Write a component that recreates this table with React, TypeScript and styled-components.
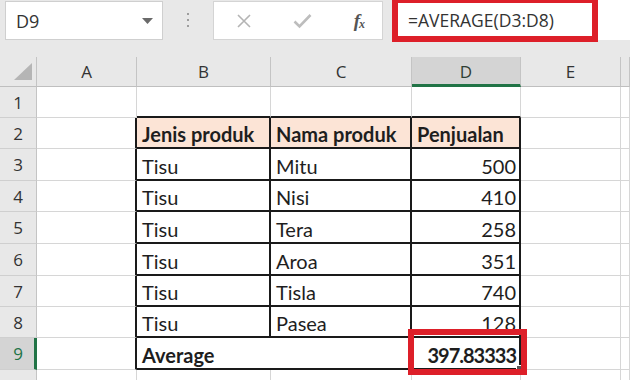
import React from "react";
import styled, { createGlobalStyle } from "styled-components";

const Global = createGlobalStyle`
  html, body { margin: 0; padding: 0; background: #ffffff; }
  body { width: 630px; height: 380px; overflow: hidden; }
`;

const UI_FONT = `"Open Sans", "Noto Sans", sans-serif`;
const CELL_FONT = `Lato, "Open Sans", sans-serif`;
const GRID = "#d6d6d6";
const INK = "#1a1a1a";
const RED = "#dd1f29";
const GREEN = "#217346";

const Page = styled.div`
  width: 630px;
  height: 380px;
  display: flex;
  flex-direction: column;
  overflow: hidden;
  background: #e8e8e8;
`;

const Toolbar = styled.div`
  height: 57px;
  flex: none;
  display: flex;
  align-items: flex-start;
  padding-left: 5px;
  background: #e8e8e8;
  font-family: ${UI_FONT};
`;

const NameBox = styled.div`
  margin-top: 1px;
  width: 158px;
  height: 39px;
  box-sizing: border-box;
  background: #fff;
  border: 1px solid #cfcfcf;
  display: flex;
  align-items: center;
  justify-content: space-between;
  padding: 0 9px 0 10px;
  font-size: 18px;
  color: #333;
`;

const Separator = styled.div`
  width: 50px;
  height: 40px;
  display: flex;
  flex-direction: column;
  align-items: center;
  justify-content: center;
  gap: 4px;
`;

const Dot = styled.span`
  width: 2px;
  height: 2px;
  background: #9d9d9d;
`;

const ButtonBox = styled.div`
  margin-top: 1px;
  width: 170px;
  height: 39px;
  box-sizing: border-box;
  background: #fff;
  border: 1px solid #d4d4d4;
  display: flex;
  align-items: center;
  padding: 0 18px 0 22px;
  justify-content: space-between;
`;

const Fx = styled.span`
  font-family: "Liberation Serif", serif;
  font-style: italic;
  font-weight: bold;
  font-size: 19px;
  color: #555;
  letter-spacing: -1px;
  & sub {
    font-size: 12px;
    vertical-align: -1px;
  }
`;

const FormulaBar = styled.div`
  margin-left: 9px;
  flex: 1;
  height: 40px;
  background: #fff;
  display: flex;
  align-items: flex-start;
`;

const FormulaHighlight = styled.div`
  width: 206px;
  height: 42px;
  box-sizing: border-box;
  border: 6px solid ${RED};
  border-top-width: 3px;
  display: flex;
  align-items: center;
  padding-left: 10px;
  font-size: 17.5px;
  color: #333;
  white-space: nowrap;
  background: #fff;
`;

const Sheet = styled.div`
  flex: 1;
  display: grid;
  grid-template-columns: 37px 100px 134px 141px 109px 100px 1fr;
  grid-template-rows: 30px 31px 31px 32px 31px 32px 32px 31px 31px 32px 31px;
  background: #fff;
`;

const Corner = styled.div`
  background: #e8e8e8;
  border-right: 1px solid #c4c4c4;
  border-bottom: 1px solid #bfbfbf;
  display: flex;
  justify-content: flex-end;
  align-items: flex-end;
  padding: 0 4px 6px 0;
`;

const ColHeader = styled.div<{ $selected?: boolean }>`
  background: ${(p) => (p.$selected ? "#d4d4d4" : "#e8e8e8")};
  border-right: 1px solid #c4c4c4;
  border-bottom: ${(p) => (p.$selected ? `3px solid ${GREEN}` : "1px solid #bfbfbf")};
  display: flex;
  align-items: center;
  justify-content: center;
  font-family: ${UI_FONT};
  font-size: 17px;
  color: ${(p) => (p.$selected ? "#2f3f35" : "#333")};
  padding-top: ${(p) => (p.$selected ? "2px" : "0")};
`;

const RowHeader = styled.div<{ $selected?: boolean }>`
  background: ${(p) => (p.$selected ? "#d4d4d4" : "#e8e8e8")};
  border-right: ${(p) => (p.$selected ? `3px solid ${GREEN}` : "1px solid #c4c4c4")};
  border-bottom: 1px solid #cfcfcf;
  display: flex;
  align-items: center;
  justify-content: center;
  font-family: ${UI_FONT};
  font-size: 17px;
  color: ${(p) => (p.$selected ? GREEN : "#333")};
  padding-left: ${(p) => (p.$selected ? "2px" : "0")};
`;

const Cell = styled.div<{
  $fill?: string;
  $align?: "left" | "right";
  $bold?: boolean;
  $rightInk?: boolean;
  $bottomInk?: boolean;
  $span?: number;
  $raised?: boolean;
  $tight?: boolean;
}>`
  position: relative;
  z-index: ${(p) => (p.$raised ? 2 : "auto")};
  grid-column: span ${(p) => p.$span ?? 1};
  background: ${(p) => p.$fill ?? "#fff"};
  border-right: ${(p) => (p.$rightInk ? `2px solid ${INK}` : `1px solid ${GRID}`)};
  border-bottom: ${(p) => (p.$bottomInk ? `2px solid ${INK}` : `1px solid ${GRID}`)};
  display: flex;
  align-items: flex-end;
  justify-content: ${(p) => (p.$align === "right" ? "flex-end" : "flex-start")};
  padding: 0 3px 1px 5px;
  font-family: ${CELL_FONT};
  font-size: 20px;
  line-height: 24px;
  font-weight: ${(p) => (p.$bold ? 700 : 400)};
  letter-spacing: ${(p) => (p.$tight ? "-1px" : "normal")};
  color: #1e1e1e;
  white-space: nowrap;
`;

const CellHighlight = styled.div`
  position: absolute;
  top: -9px;
  left: -4px;
  right: -8px;
  bottom: -7px;
  border: 6px solid ${RED};
  pointer-events: none;
`;

const FillHandle = styled.span`
  position: absolute;
  right: -3px;
  bottom: -3px;
  width: 4px;
  height: 4px;
  background: #555;
  border: 1px solid #fff;
`;

const columns = ["A", "B", "C", "D", "E", ""];

type Row = { jenis: string; nama: string; jual: string };
const data: Row[] = [
  { jenis: "Tisu", nama: "Mitu", jual: "500" },
  { jenis: "Tisu", nama: "Nisi", jual: "410" },
  { jenis: "Tisu", nama: "Tera", jual: "258" },
  { jenis: "Tisu", nama: "Aroa", jual: "351" },
  { jenis: "Tisu", nama: "Tisla", jual: "740" },
  { jenis: "Tisu", nama: "Pasea", jual: "128" },
];

const PEACH = "#fce4d6";

function CornerTriangle() {
  return (
    <svg width="18" height="17" viewBox="0 0 18 17">
      <polygon points="18,0 18,17 0,17" fill="#b5b5b5" />
    </svg>
  );
}

function DropArrow() {
  return (
    <svg width="11" height="6" viewBox="0 0 11 6">
      <polygon points="0,0 11,0 5.5,6" fill="#6a6a6a" />
    </svg>
  );
}

function CancelIcon() {
  return (
    <svg width="16" height="16" viewBox="0 0 16 16">
      <path d="M2 2 L14 14 M14 2 L2 14" stroke="#b4b4b4" strokeWidth="1.6" fill="none" />
    </svg>
  );
}

function EnterIcon() {
  return (
    <svg width="19" height="16" viewBox="0 0 19 16">
      <path d="M1.5 8.5 L6.5 13.5 L17.5 2" stroke="#bdbdbd" strokeWidth="2.6" fill="none" />
    </svg>
  );
}

export default function App() {
  return (
    <Page>
      <Global />
      <Toolbar>
        <NameBox>
          <span>D9</span>
          <DropArrow />
        </NameBox>
        <Separator>
          <Dot />
          <Dot />
          <Dot />
        </Separator>
        <ButtonBox>
          <CancelIcon />
          <EnterIcon />
          <Fx>
            f<sub>x</sub>
          </Fx>
        </ButtonBox>
        <FormulaBar>
          <FormulaHighlight>=AVERAGE(D3:D8)</FormulaHighlight>
        </FormulaBar>
      </Toolbar>
      <Sheet>
        <Corner>
          <CornerTriangle />
        </Corner>
        {columns.map((c, i) => (
          <ColHeader key={i} $selected={c === "D"}>
            {c}
          </ColHeader>
        ))}

        {/* Row 1 */}
        <RowHeader>1</RowHeader>
        <Cell />
        <Cell $bottomInk />
        <Cell $bottomInk />
        <Cell $bottomInk />
        <Cell />
        <Cell />

        {/* Row 2 */}
        <RowHeader>2</RowHeader>
        <Cell $rightInk />
        <Cell $fill={PEACH} $bold $rightInk $bottomInk>
          Jenis produk
        </Cell>
        <Cell $fill={PEACH} $bold $rightInk $bottomInk>
          Nama produk
        </Cell>
        <Cell $fill={PEACH} $bold $rightInk $bottomInk>
          Penjualan
        </Cell>
        <Cell />
        <Cell />

        {data.map((r, i) => (
          <React.Fragment key={i}>
            <RowHeader>{i + 3}</RowHeader>
            <Cell $rightInk />
            <Cell $rightInk $bottomInk>
              {r.jenis}
            </Cell>
            <Cell $rightInk $bottomInk>
              {r.nama}
            </Cell>
            <Cell $rightInk $bottomInk $align="right">
              {r.jual}
            </Cell>
            <Cell />
            <Cell />
          </React.Fragment>
        ))}

        {/* Row 9 */}
        <RowHeader $selected>9</RowHeader>
        <Cell $rightInk />
        <Cell $span={2} $bold $rightInk $bottomInk>
          Average
        </Cell>
        <Cell $bold $rightInk $bottomInk $align="right" $raised $tight>
          397.83333
          <FillHandle />
          <CellHighlight />
        </Cell>
        <Cell />
        <Cell />

        {/* Row 10 (only its top edge is visible) */}
        <RowHeader />
        <Cell />
        <Cell />
        <Cell />
        <Cell />
        <Cell />
        <Cell />
      </Sheet>
    </Page>
  );
}
